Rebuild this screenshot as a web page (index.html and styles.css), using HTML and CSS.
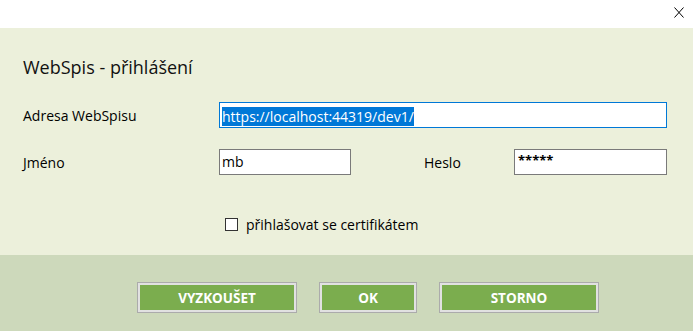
FILE: index.html
```html
<!DOCTYPE html>
<html lang="cs">
<head>
<meta charset="utf-8">
<title>WebSpis - přihlášení</title>
<link rel="stylesheet" href="styles.css">
</head>
<body>
<div class="titlebar">
  <span class="close" aria-label="Zavřít">
    <svg width="10" height="11" viewBox="0 0 10 11"><path d="M0.5 0.5 L9.5 10.5 M9.5 0.5 L0.5 10.5" stroke="#000" stroke-width="1" fill="none"/></svg>
  </span>
</div>
<main class="content">
  <h1 class="title">WebSpis - přihlášení</h1>
  <div class="grid">
    <div class="label">Adresa WebSpisu</div>
    <div class="field field-focus wide"><span class="selected">https://localhost:44319/dev1/</span></div>
    <div class="label">Jméno</div>
    <div class="field">mb</div>
    <div class="spacer"></div>
    <div class="label">Heslo</div>
    <div class="field pass">*****</div>
  </div>
  <div class="check">
    <span class="box"></span>
    <span class="check-text">přihlašovat se certifikátem</span>
  </div>
</main>
<footer class="buttons">
  <button class="btn btn-test">VYZKOUŠET</button>
  <button class="btn btn-ok">OK</button>
  <button class="btn btn-cancel">STORNO</button>
</footer>
</body>
</html>
```
FILE: styles.css
```css
html, body {
  margin: 0;
  padding: 0;
  height: 100%;
}
body {
  font-family: "Open Sans", "Noto Sans", sans-serif;
  color: #000;
  background: #cdd9bb;
  display: flex;
  flex-direction: column;
}
.titlebar {
  height: 28px;
  background: #fff;
  display: flex;
  justify-content: flex-end;
  align-items: flex-start;
}
.close {
  display: block;
  margin: 7px 9px 0 0;
  width: 10px;
  height: 11px;
}
.close svg { display: block; }
.content {
  height: 227px;
  background: #ecf0db;
  padding: 0 0 0 23px;
  box-sizing: border-box;
}
.title {
  margin: 0;
  padding-top: 26px;
  font-size: 18px;
  font-weight: 400;
  line-height: 26px;
  color: #111;
}
.grid {
  margin-top: 22px;
  display: grid;
  grid-template-columns: 196px 132px 73px 90px 153px;
  grid-template-rows: 26px 26px;
  row-gap: 21px;
  align-items: center;
}
.label {
  font-size: 14px;
}
.field {
  height: 26px;
  box-sizing: border-box;
  border: 1px solid #7a7a7a;
  background: #fff;
  font-size: 14px;
  line-height: 24px;
  padding-left: 2px;
  white-space: nowrap;
  overflow: hidden;
}
.field-focus {
  border-color: #0078d7;
}
.wide {
  grid-column: 2 / -1;
}
.selected {
  background: #0078d7;
  color: #fff;
  display: inline-block;
  line-height: 19px;
  vertical-align: middle;
}
.pass {
  font-weight: 700;
  font-size: 13px;
  line-height: 20px;
  padding-left: 3px;
}
.check {
  margin: 40px 0 0 202px;
  display: flex;
  align-items: center;
  gap: 8px;
}
.box {
  width: 11px;
  height: 11px;
  border: 1px solid #333;
  background: #fff;
}
.check-text {
  font-size: 14px;
}
.buttons {
  flex: 1;
  display: flex;
  align-items: flex-start;
  padding: 27px 0 0 137px;
  gap: 22px;
}
.btn {
  height: 31px;
  box-sizing: border-box;
  border: 1px solid #ababab;
  box-shadow: inset 0 0 0 2px #e1e1e1;
  background: #7bad4e;
  color: #fff;
  font-family: "Open Sans", "Noto Sans", sans-serif;
  font-weight: 700;
  font-size: 13.5px;
  margin: 0;
  padding: 0;
}
.btn-test { width: 160px; }
.btn-ok { width: 98px; }
.btn-cancel { width: 160px; }
```
